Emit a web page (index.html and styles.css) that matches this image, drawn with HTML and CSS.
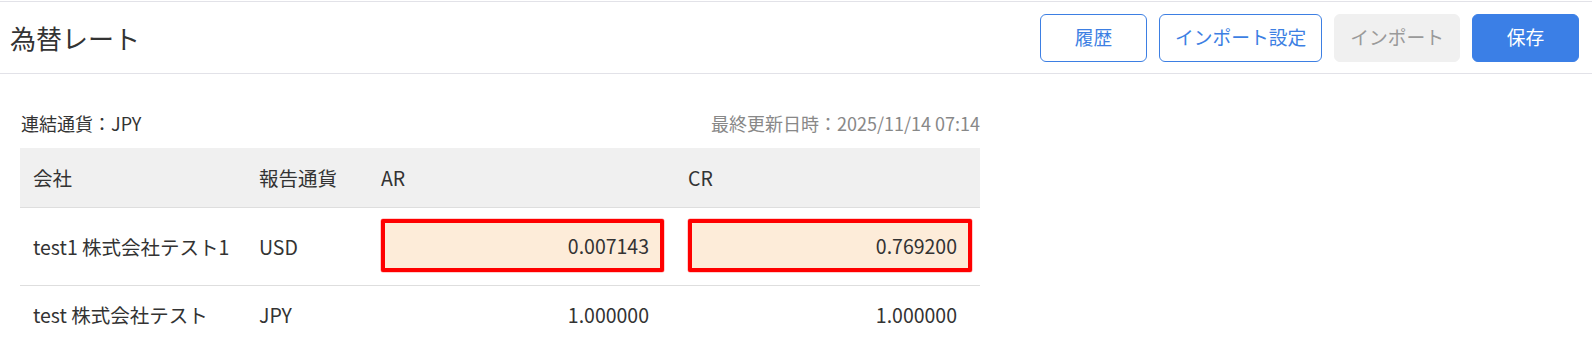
FILE: index.html
```html
<!DOCTYPE html>
<html lang="ja">
<head>
<meta charset="utf-8">
<title>為替レート</title>
<link rel="stylesheet" href="styles.css">
</head>
<body>
<div class="page">
  <header class="topbar">
    <h1 class="title">為替レート</h1>
    <div class="actions">
      <button class="btn btn-outline btn-min">履歴</button>
      <button class="btn btn-outline">インポート設定</button>
      <button class="btn btn-disabled">インポート</button>
      <button class="btn btn-primary btn-min">保存</button>
    </div>
  </header>
  <main class="content">
    <div class="info">
      <span class="info-left">連結通貨：JPY</span>
      <span class="info-right">最終更新日時：2025/11/14 07:14</span>
    </div>
    <table class="rates">
      <colgroup>
        <col class="c-company">
        <col class="c-cur">
        <col class="c-ar">
        <col class="c-cr">
      </colgroup>
      <thead>
        <tr>
          <th>会社</th>
          <th>報告通貨</th>
          <th>AR</th>
          <th class="last">CR</th>
        </tr>
      </thead>
      <tbody>
        <tr class="row-edit">
          <td>test1 株式会社テスト1</td>
          <td>USD</td>
          <td class="num"><div class="rate-input">0.007143</div></td>
          <td class="num last"><div class="rate-input">0.769200</div></td>
        </tr>
        <tr class="row-plain">
          <td>test 株式会社テスト</td>
          <td>JPY</td>
          <td class="num plain">1.000000</td>
          <td class="num plain last">1.000000</td>
        </tr>
      </tbody>
    </table>
  </main>
</div>
</body>
</html>
```
FILE: styles.css
```css
* { box-sizing: border-box; }
html, body {
  margin: 0;
  padding: 0;
  background: #ffffff;
}
body {
  font-family: "Noto Sans CJK JP", "Noto Sans", sans-serif;
  color: #333333;
  padding-top: 1px;
}
.topbar {
  display: flex;
  align-items: center;
  justify-content: space-between;
  height: 73px;
  border-top: 1px solid #e2e2e8;
  border-bottom: 1px solid #e2e2e8;
  padding: 0 13px 0 10px;
}
.title {
  margin: 0;
  font-size: 26px;
  font-weight: 400;
  line-height: 1;
  color: #333333;
}
.actions {
  display: flex;
  gap: 12px;
}
.btn {
  height: 48px;
  padding: 0 15px;
  border-radius: 6px;
  font-family: "Noto Sans CJK JP", "Noto Sans", sans-serif;
  font-size: 18.75px;
  line-height: 1;
  border: 1px solid transparent;
  background: #fff;
  cursor: pointer;
}
.btn-min { min-width: 107px; }
.btn-outline {
  border-color: #3d7fe3;
  color: #3d7fe3;
  background: #fff;
}
.btn-disabled {
  background: #f0f0f0;
  border-color: #f0f0f0;
  color: #9a9a9a;
}
.btn-primary {
  background: #3b7fe6;
  border-color: #3b7fe6;
  color: #ffffff;
}
.content {
  padding: 0 0 0 20px;
  width: 980px;
}
.info {
  display: flex;
  justify-content: space-between;
  align-items: center;
  height: 26px;
  margin-top: 36px;
  margin-bottom: 12px;
  font-size: 18px;
  line-height: 26px;
}
.info-left { color: #333; margin-left: 1px; }
.info-right { color: #888888; }
.rates {
  width: 960px;
  border-collapse: collapse;
  table-layout: fixed;
  font-size: 19.5px;
}
.c-company { width: 226px; }
.c-cur { width: 122px; }
.c-ar { width: 308px; }
.c-cr { width: 304px; }
.rates th {
  background: #f0f0f0;
  font-weight: 400;
  text-align: left;
  height: 59px;
  padding: 0 12px 0 13px;
  border-bottom: 1px solid #dedede;
  color: #333;
}
.rates td {
  padding: 0 12px 0 13px;
  border-bottom: 1px solid #dedede;
  vertical-align: middle;
}
.rates th.last, .rates td.last { padding-right: 8px; padding-left: 12px; }
.row-edit td { height: 78px; }
.row-plain td { height: 58px; border-bottom: none; }
.num { text-align: right; }
.rate-input {
  height: 53px;
  border: 4px solid #ff0000;
  box-shadow: 0 0 0 0.5px rgba(255, 60, 60, 0.5);
  border-radius: 2px;
  background: #fdecd9;
  padding: 0 11px;
  display: flex;
  align-items: center;
  justify-content: flex-end;
  margin-top: -1px;
}
.plain { padding-right: 27px !important; }
.rates td.plain.last { padding-right: 23px !important; }
```
